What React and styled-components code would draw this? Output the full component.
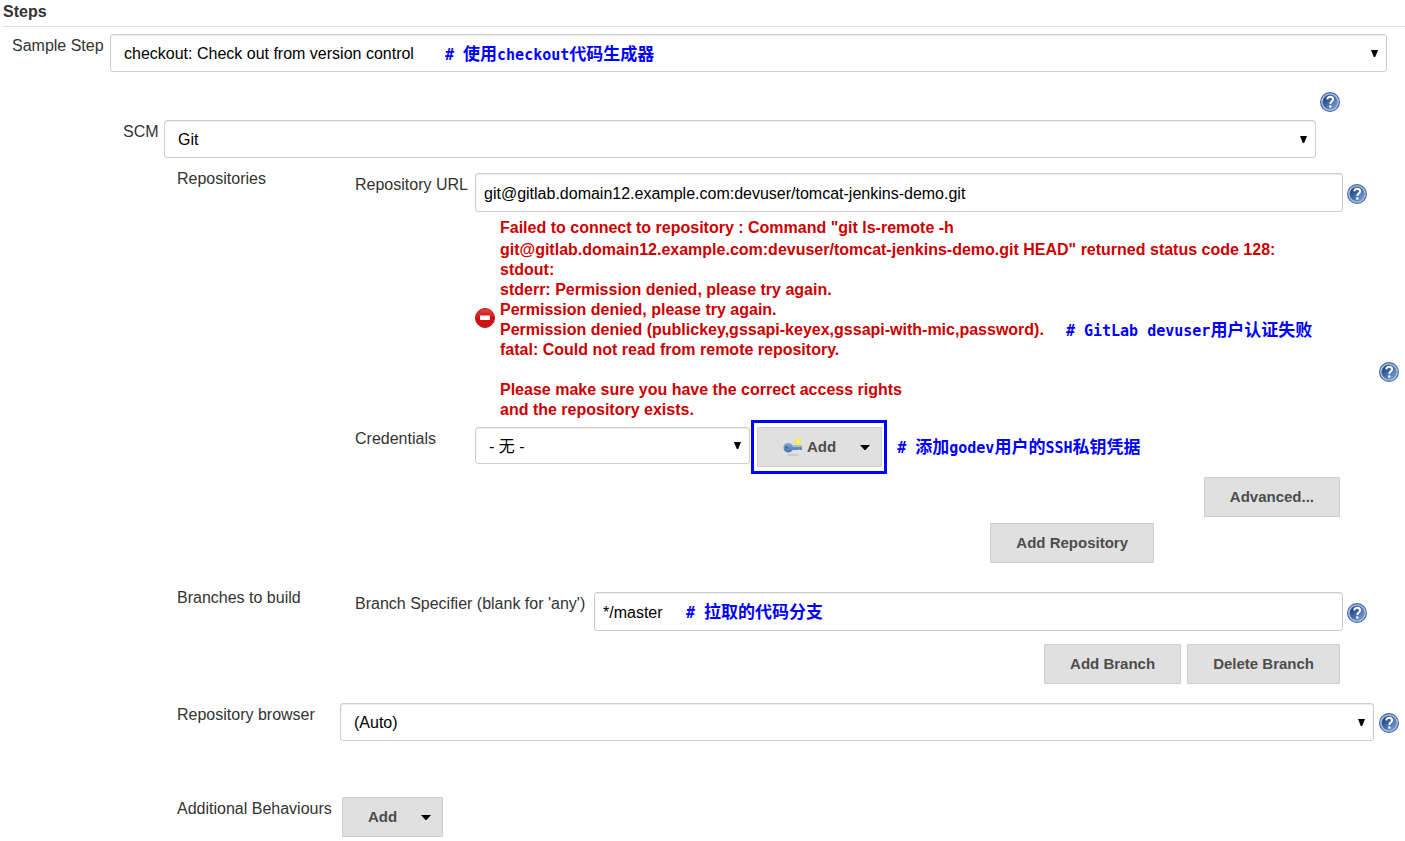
import React from "react";
import styled, { createGlobalStyle } from "styled-components";

const GlobalStyle = createGlobalStyle`
  *, *::before, *::after { box-sizing: border-box; }
  body {
    margin: 0;
    background: #fff;
    color: #333;
    font: 16px/20px "Liberation Sans", "Noto Sans CJK SC", sans-serif;
  }
`;

const Page = styled.main`
  display: flex;
  flex-direction: column;
`;

const Title = styled.h1`
  margin: 0 0 7px 3px;
  padding: 2px 0 4px;
  border-bottom: 1px solid #ddd;
  font-size: 16px;
  line-height: 20px;
`;

const FormRow = styled.div`
  display: flex;
  align-items: flex-start;
  padding-left: ${(p) => p.$left || 0}px;
  padding-right: ${(p) => p.$right || 0}px;
  margin-top: ${(p) => p.$top || 0}px;
`;

const Label = styled.label`
  flex: none;
  width: ${(p) => p.$width}px;
  padding-top: 2px;
  white-space: nowrap;
`;

const GroupLabel = styled(Label).attrs({ as: "div" })``;

const Content = styled.div`
  flex: 1;
  min-width: 0;
  display: flex;
  flex-direction: column;
`;

const Field = styled.div`
  position: relative;
  display: flex;
  flex: ${(p) => (p.$width ? "none" : 1)};
  width: ${(p) => (p.$width ? `${p.$width}px` : "auto")};
  min-width: 0;
`;

const control = `
  width: 100%;
  margin: 0;
  border: 1px solid #ccc;
  border-radius: 3px;
  background: #fff;
  box-shadow: inset 0 1px 1px rgba(0, 0, 0, 0.08);
  color: #000;
  font: inherit;
`;

const SelectBox = styled.select`
  ${control}
  appearance: none;
  height: ${(p) => (p.$compact ? 37 : 38)}px;
  padding: 2px 30px 0 13px;
`;

const TextInput = styled.input`
  ${control}
  height: 39px;
  padding: 2px 8px 0;
`;

const SelectArrow = styled.svg`
  position: absolute;
  bottom: 15px;
  right: 9px;
  pointer-events: none;
`;

const Note = styled.span`
  color: #00f;
  font: bold 15px/20px "DejaVu Sans Mono", "Noto Sans CJK SC", monospace;
  white-space: pre;
`;

const NoteHan = styled.span`
  font-size: 17px;
`;

const FieldNote = styled(Note)`
  position: absolute;
  top: 10px;
  left: ${(p) => p.$left}px;
  pointer-events: none;
`;

const HelpButton = styled.button`
  flex: none;
  display: block;
  align-self: center;
  width: 20px;
  height: 20px;
  padding: 0;
  border: 0;
  background: none;
  margin-top: ${(p) => p.$drop || 2}px;
  margin-left: ${(p) => p.$gap || 0}px;
`;

const HelpLine = styled.div`
  display: flex;
  justify-content: flex-end;
  padding: 18px 65px 8px 0;
`;

const ErrorBox = styled.div`
  display: flex;
  align-items: center;
  gap: 5px;
  padding-left: 120px;
  margin-top: 4px;
  color: #c00;
  font-weight: bold;
`;

const ErrorLines = styled.div`
  padding-top: 2px;
  white-space: pre;
`;

const ErrorLine = styled.div`
  display: flex;
  gap: 22px;
  height: 20px;
  &:first-child { height: 22px; }
`;

const Button = styled.button`
  flex: none;
  display: flex;
  align-items: center;
  height: 40px;
  padding: 0 ${(p) => (p.$menu ? 11 : 25)}px 0 25px;
  border: 1px solid #ccc;
  border-radius: 1px;
  background: #e0e0e0;
  color: #4d4d4d;
  font: bold 15px/20px "Liberation Sans", sans-serif;
  white-space: nowrap;
`;

const Caret = styled.svg`
  margin-left: 24px;
`;

const Highlight = styled.div`
  flex: none;
  margin: -7px 10px 0 1px;
  padding: 4px 2px 4px 3px;
  border: 3px solid #00f;
`;

const CredentialNote = styled(Note)`
  padding-top: 10px;
`;

const ButtonRow = styled.div`
  display: flex;
  justify-content: flex-end;
  gap: 6px;
  padding-right: ${(p) => p.$right}px;
  margin-top: ${(p) => p.$top}px;
`;

function Help({ id, ...rest }) {
  const fill = `help-${id}`;
  return (
    <HelpButton type="button" aria-label="Help" {...rest}>
      <svg width="20" height="20" viewBox="0 0 20 20" aria-hidden="true">
        <defs>
          <linearGradient id={fill} x1="0" y1="0" x2="1" y2="1">
            <stop offset="0.2" stopColor="#1f4685" />
            <stop offset="1" stopColor="#86abdc" />
          </linearGradient>
        </defs>
        <circle cx="10" cy="10" r="9.4" fill="#b9cbe6" stroke="#4469a3" strokeWidth="1.2" />
        <circle cx="10" cy="10" r="7.3" fill={`url(#${fill})`} stroke="#5f83b9" strokeWidth="0.6" />
        <path d="M7.2 7.400C7.400 5.500 8.600 4.700 10.200 4.700c1.700 0 2.900 1 2.900 2.600 0 2.300-2.800 2.300-2.800 4.700" fill="none" stroke="#fff" strokeWidth="2" />
        <rect x="9.200" y="13.400" width="2.200" height="2.200" fill="#fff" />
      </svg>
    </HelpButton>
  );
}

function Select({ id, value, width, compact, children }) {
  return (
    <Field $width={width}>
      <SelectBox id={id} defaultValue={value} $compact={compact}>
        <option>{value}</option>
      </SelectBox>
      <SelectArrow width="7" height="7" viewBox="0 0 7 7" aria-hidden="true">
        <path d="M0 0h7L4.200 7H2.800z" fill="#000" />
      </SelectArrow>
      {children}
    </Field>
  );
}

function MenuCaret() {
  return (
    <Caret width="10" height="5" viewBox="0 0 10 5" aria-hidden="true">
      <path d="M0 0h10L5.500 5h-1z" fill="#000" />
    </Caret>
  );
}

const KeySvg = styled.svg`
  margin-right: 4px;
`;

function KeyIcon() {
  return (
    <KeySvg width="20" height="20" viewBox="0 0 20 20" aria-hidden="true">
      <defs>
        <linearGradient id="key-metal" x1="0" y1="0" x2="0" y2="1">
          <stop offset="0" stopColor="#7fa8d6" />
          <stop offset="1" stopColor="#4674b0" />
        </linearGradient>
        <radialGradient id="key-spark">
          <stop offset="0" stopColor="#fffbb0" />
          <stop offset="0.5" stopColor="#f7ea45" />
          <stop offset="1" stopColor="#f7ea45" stopOpacity="0" />
        </radialGradient>
      </defs>
      <ellipse cx="10" cy="18" rx="6" ry="1.300" fill="#cbcbcb" />
      <path d="M5 6c2.300 0 4 1 4.800 2.500H18l1 1v3.500h-2l-.8-.8-1 .8H9.600C8.800 14.400 7.300 15.400 5 15.400c-2.600 0-4.500-2-4.500-4.800S2.400 6 5 6z" fill="url(#key-metal)" />
      <path d="M9 9.500h9" stroke="#a9c5e6" strokeWidth="0.800" />
      <circle cx="3.600" cy="10.300" r="1.200" fill="#3a639c" />
      <circle cx="15" cy="5" r="4.500" fill="url(#key-spark)" />
    </KeySvg>
  );
}

function ErrorIcon() {
  return (
    <svg width="20" height="20" viewBox="0 0 20 20" role="img" aria-label="Error">
      <defs>
        <linearGradient id="error-disc" x1="0" y1="0" x2="0" y2="1">
          <stop offset="0" stopColor="#e04a4a" />
          <stop offset="0.5" stopColor="#d50d0d" />
          <stop offset="1" stopColor="#cc1717" />
        </linearGradient>
      </defs>
      <circle cx="10" cy="10" r="9.500" fill="url(#error-disc)" stroke="#b51818" />
      <rect x="5" y="7.500" width="10" height="4.500" rx="0.500" fill="#fff" />
    </svg>
  );
}

export default function App() {
  return (
    <>
      <GlobalStyle />
      <Page>
        <Title>Steps</Title>

        <FormRow $left={12} $right={18}>
          <Label htmlFor="step" $width={98}>Sample Step</Label>
          <Select id="step" value="checkout: Check out from version control">
            <FieldNote $left={335}>
              # <NoteHan>使用</NoteHan>checkout<NoteHan>代码生成器</NoteHan>
            </FieldNote>
          </Select>
        </FormRow>

        <HelpLine>
          <Help id="step" />
        </HelpLine>

        <FormRow $left={123} $right={89}>
          <Label htmlFor="scm" $width={41}>SCM</Label>
          <Select id="scm" value="Git" />
        </FormRow>

        <FormRow $left={177} $right={6} $top={9}>
          <GroupLabel $width={178}>Repositories</GroupLabel>
          <Content>
            <FormRow $right={7} $top={6}>
              <Label htmlFor="url" $width={120}>Repository URL</Label>
              <Field>
                <TextInput id="url" type="text" defaultValue="git@gitlab.domain12.example.com:devuser/tomcat-jenkins-demo.git" />
              </Field>
              <Help id="url" $gap={4} />
            </FormRow>
            <ErrorBox>
              <ErrorIcon />
              <ErrorLines>
                <ErrorLine>Failed to connect to repository : Command "git ls-remote -h</ErrorLine>
                <ErrorLine>git@gitlab.domain12.example.com:devuser/tomcat-jenkins-demo.git HEAD" returned status code 128:</ErrorLine>
                <ErrorLine>stdout:</ErrorLine>
                <ErrorLine>stderr: Permission denied, please try again.</ErrorLine>
                <ErrorLine>Permission denied, please try again.</ErrorLine>
                <ErrorLine>
                  Permission denied (publickey,gssapi-keyex,gssapi-with-mic,password).
                  <Note># GitLab devuser<NoteHan>用户认证失败</NoteHan></Note>
                </ErrorLine>
                <ErrorLine>fatal: Could not read from remote repository.</ErrorLine>
                <ErrorLine />
                <ErrorLine>Please make sure you have the correct access rights</ErrorLine>
                <ErrorLine>and the repository exists.</ErrorLine>
              </ErrorLines>
            </ErrorBox>
            <FormRow $top={7}>
              <Label htmlFor="credentials" $width={120}>Credentials</Label>
              <Select id="credentials" value="- 无 -" width={275} compact />
              <Highlight>
                <Button type="button" $menu>
                  <KeyIcon />
                  Add
                  <MenuCaret />
                </Button>
              </Highlight>
              <CredentialNote>
                # <NoteHan>添加</NoteHan>godev<NoteHan>用户的</NoteHan>SSH<NoteHan>私钥凭据</NoteHan>
              </CredentialNote>
            </FormRow>
            <ButtonRow $right={34} $top={3}>
              <Button type="button">Advanced...</Button>
            </ButtonRow>
            <ButtonRow $right={220} $top={6}>
              <Button type="button">Add Repository</Button>
            </ButtonRow>
          </Content>
          <Help id="repositories" $gap={5} $drop={14} />
        </FormRow>

        <FormRow $left={177} $right={38} $top={23}>
          <GroupLabel $width={178}>Branches to build</GroupLabel>
          <Content>
            <FormRow $top={6}>
              <Label htmlFor="branch" $width={239}>Branch Specifier (blank for 'any')</Label>
              <Field>
                <TextInput id="branch" type="text" defaultValue="*/master" />
                <FieldNote $left={92}>
                  # <NoteHan>拉取的代码分支</NoteHan>
                </FieldNote>
              </Field>
              <Help id="branch" $gap={4} />
            </FormRow>
            <ButtonRow $right={27} $top={13}>
              <Button type="button">Add Branch</Button>
              <Button type="button">Delete Branch</Button>
            </ButtonRow>
          </Content>
        </FormRow>

        <FormRow $left={177} $right={6} $top={19}>
          <Label htmlFor="browser" $width={163}>Repository browser</Label>
          <Select id="browser" value="(Auto)" />
          <Help id="browser" $gap={5} />
        </FormRow>

        <FormRow $left={177} $top={56}>
          <GroupLabel $width={165}>Additional Behaviours</GroupLabel>
          <Button type="button" $menu>
            Add
            <MenuCaret />
          </Button>
        </FormRow>
      </Page>
    </>
  );
}
